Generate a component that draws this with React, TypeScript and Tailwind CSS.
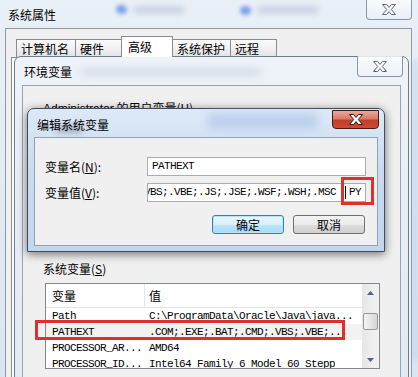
import React from "react";

function XGlyph({ active }: { active?: boolean }) {
  return (
    <svg width="14" height="11" viewBox="0 0 14 11">
      <polygon
        points="0.5,0.5 4.6,0.5 7,3.4 9.4,0.5 13.5,0.5 9.3,5.5 13.5,10.5 9.4,10.5 7,7.6 4.6,10.5 0.5,10.5 4.7,5.5"
        fill={active ? "#ffffff" : "#f7f9fb"}
        stroke={active ? "#3b1510" : "#5d6878"}
        strokeWidth="1"
        strokeLinejoin="round"
      />
    </svg>
  );
}

function Tab({
  children,
  w,
  selected,
}: {
  children: React.ReactNode;
  w: string;
  selected?: boolean;
}) {
  if (selected) {
    return (
      <div
        className={`${w} -ml-px h-[21px] border border-b-0 border-[#898c95] bg-white pl-[6px] leading-[20px] relative z-10`}
      >
        {children}
      </div>
    );
  }
  return (
    <div
      className={`${w} -ml-px h-[18px] border border-b-0 border-[#898c95] bg-[linear-gradient(180deg,#fbfbfb_0%,#f0f0f0_50%,#e3e3e3_100%)] pl-[4px] leading-[17px]`}
    >
      {children}
    </div>
  );
}

const rows = [
  { k: "Path", v: "C:\\ProgramData\\Oracle\\Java\\java...", hl: false },
  { k: "PATHEXT", v: ".COM;.EXE;.BAT;.CMD;.VBS;.VBE;...", hl: true },
  { k: "PROCESSOR_AR...", v: "AMD64", hl: false },
  { k: "PROCESSOR_ID...", v: "Intel64 Family 6 Model 60 Stepp", hl: false },
];

export default function App() {
  return (
    <div className="relative w-[418px] h-[377px] overflow-hidden bg-[linear-gradient(180deg,#eaf0f7_0%,#dbe5f1_100%)] font-['Noto_Sans_CJK_SC',sans-serif] text-[12px] text-black">
      {/* aero glass blurred background */}
      <div className="absolute left-[116px] top-[5px] w-[11px] h-[9px] rounded-full bg-[#4f7fe6] blur-[2px] opacity-70" />
      <div className="absolute left-[134px] top-[7px] w-[50px] h-[6px] bg-[#8496ba] blur-[3px] opacity-40" />
      <div className="absolute left-[240px] top-[6px] w-[11px] h-[9px] rounded-full bg-[#4f7fe6] blur-[2px] opacity-70" />
      <div className="absolute left-[258px] top-[7px] w-[60px] h-[6px] bg-[#8496ba] blur-[3px] opacity-40" />
      <div className="absolute left-[412px] top-[60px] w-[6px] h-[300px] bg-[#b9cbe3] blur-[3px] opacity-60" />

      {/* 系统属性 title */}
      <div className="absolute left-[8px] top-[6px] leading-[18px]">系统属性</div>
      <div className="absolute left-[366px] top-[-1px] w-[46px] h-[21px] rounded-b-[4px] border border-t-0 border-[#8a97a9] bg-[linear-gradient(180deg,rgba(255,255,255,0.7),rgba(235,242,250,0.4))] flex items-center justify-center">
        <XGlyph />
      </div>

      {/* 系统属性 client */}
      <div className="absolute left-[5px] top-[28px] w-[407px] h-[360px] border border-[#8d9aab] bg-[#f0f0f0]">
        <div className="flex items-end h-[28px] pl-[11px] pt-[7px]">
          <Tab w="w-[60px]">计算机名</Tab>
          <Tab w="w-[47px]">硬件</Tab>
          <Tab w="w-[52px]" selected>
            高级
          </Tab>
          <Tab w="w-[59px]">系统保护</Tab>
          <Tab w="w-[47px]">远程</Tab>
        </div>
        <div className="ml-[5px] mr-[5px] h-[330px] border border-[#898c95] bg-[#fbfbfb]" />
      </div>

      {/* 环境变量 window */}
      <div className="absolute left-[14px] top-[56px] w-[395px] h-[340px] rounded-t-[7px] border border-[#6f7c8e] bg-[linear-gradient(180deg,#eef3f9_0%,#e1e9f3_100%)]">
        <div className="absolute left-[66px] top-[12px] w-[180px] h-[6px] bg-[#9aa8bd] blur-[4px] opacity-40" />
        <div className="relative h-[28px] pl-[9px] pt-[7px] leading-[16px]">环境变量</div>
        <div className="absolute left-[342px] top-[-1px] w-[46px] h-[21px] rounded-b-[4px] border border-t-0 border-[#8a97a9] bg-[linear-gradient(180deg,rgba(255,255,255,0.8),rgba(235,242,250,0.5))] flex items-center justify-center">
          <XGlyph />
        </div>
        <div className="mx-[7px] h-[320px] border border-[#97a4b6] bg-[#f0f0f0] pl-[20px] pt-[14px]">
          <div className="leading-[16px] whitespace-nowrap">
            <span className="font-['Liberation_Sans',sans-serif]">Administrator</span> 的用户变量(<u>U</u>)
          </div>
          <div className="mt-[144px] leading-[16px]">
            系统变量(<u>S</u>)
          </div>
          {/* list view */}
          <div className="mt-[6px] ml-[2px] w-[335px] h-[86px] border border-[#828790] bg-white flex overflow-hidden">
            <div className="flex-1 flex flex-col">
              <div className="h-[24px] flex items-center border-b border-[#e5e5e5] shrink-0">
                <div className="w-[99px] h-full pl-[6px] flex items-center border-r border-[#e3e8ee]">变量</div>
                <div className="pl-[4px]">值</div>
              </div>
              {rows.map((r) => (
                <div
                  key={r.k}
                  className={`h-[16px] shrink-0 flex items-center font-['Liberation_Mono',monospace] text-[11px] tracking-[-0.6px] whitespace-nowrap ${
                    r.hl ? "bg-[#f2f2f2]" : "bg-white"
                  }`}
                >
                  <div className="w-[103px] pl-[6px] overflow-hidden">{r.k}</div>
                  <div className="overflow-hidden">{r.v}</div>
                </div>
              ))}
            </div>
            {/* scrollbar */}
            <div className="w-[17px] h-full bg-[linear-gradient(90deg,#e6e6e6,#f2f2f2)] flex flex-col items-center">
              <div className="h-[17px] w-full flex items-center justify-center">
                <svg width="7" height="4" viewBox="0 0 7 4">
                  <polygon points="0,4 3.5,0 7,4" fill="#4d6185" />
                </svg>
              </div>
              <div className="mt-[12px] w-[15px] h-[17px] rounded-[2px] border border-[#979797] bg-[linear-gradient(90deg,#f3f3f3,#e6e6e6_50%,#d6d6d6)]" />
              <div className="flex-1" />
              <div className="h-[17px] w-full flex items-center justify-center">
                <svg width="7" height="4" viewBox="0 0 7 4">
                  <polygon points="0,0 7,0 3.5,4" fill="#4d6185" />
                </svg>
              </div>
            </div>
          </div>
        </div>
      </div>

      {/* 编辑系统变量 dialog */}
      <div className="absolute left-[27px] top-[108px] w-[358px] h-[144px] rounded-t-[7px] border border-[#3e4c5e] bg-[linear-gradient(180deg,#dde9f7_0%,#cbdcf0_40%,#c2d6ee_100%)] shadow-[0_2px_10px_rgba(0,0,0,0.55)]">
        <div className="absolute left-[28px] top-[17px] w-[26px] h-[6px] bg-[#556070] blur-[3px] opacity-50" />
        <div className="absolute left-[180px] top-[4px] w-[110px] h-[16px] bg-[#a9c3e6] blur-[5px] opacity-60" />
        <div className="relative h-[28px] pl-[9px] pt-[8px] leading-[16px]">编辑系统变量</div>
        <div className="absolute left-[304px] top-[1px] w-[47px] h-[19px] rounded-b-[4px] border border-[#4a1a14] bg-[linear-gradient(180deg,#e9a99b_0%,#d97b68_45%,#c13f2b_55%,#c94a36_100%)] flex items-center justify-center">
          <XGlyph active />
        </div>
        <div className="mx-[6px] h-[109px] border border-[#8fa2ba] bg-[#f0f0f0] pl-[10px] pt-[19px]">
          <div className="flex items-center h-[19px]">
            <div className="w-[102px] leading-[16px]">
              变量名(<u>N</u>):
            </div>
            <div className="w-[219px] h-[19px] border border-[#abadb3] bg-white pl-[4px] flex items-center font-['Liberation_Mono',monospace] text-[11px] tracking-[-0.6px]">
              PATHEXT
            </div>
          </div>
          <div className="flex items-center h-[19px] mt-[7px]">
            <div className="w-[102px] leading-[16px]">
              变量值(<u>V</u>):
            </div>
            <div className="w-[219px] h-[19px] border border-[#abadb3] bg-white flex items-center overflow-hidden whitespace-nowrap font-['Liberation_Mono',monospace] text-[11px] tracking-[-0.6px]">
              <span className="ml-[-4px]">VBS;.VBE;.JS;.JSE;.WSF;.WSH;.MSC</span>
              <span className="ml-[9px] w-px h-[13px] bg-black" />
              <span className="ml-[3px]">PY</span>
            </div>
          </div>
          <div className="flex justify-end gap-[9px] pr-[12px] mt-[13px]">
            <div className="w-[72px] h-[19px] rounded-[3px] border border-[#3c7fb1] bg-[linear-gradient(180deg,#eaf6fd_0%,#d9f0fc_50%,#bee6fd_51%,#a7d9f5_100%)] shadow-[inset_0_0_0_1px_#b5e2f7] flex items-center justify-center leading-[16px]">
              确定
            </div>
            <div className="w-[72px] h-[19px] rounded-[3px] border border-[#707070] bg-[linear-gradient(180deg,#f2f2f2_0%,#ebebeb_50%,#dddddd_51%,#cfcfcf_100%)] flex items-center justify-center leading-[16px]">
              取消
            </div>
          </div>
        </div>
      </div>

      {/* red highlight boxes */}
      <div className="absolute left-[341px] top-[177px] w-[33px] h-[28px] border-[3px] border-[#e0302c]" />
      <div className="absolute left-[35px] top-[320px] w-[310px] h-[20px] border-[3px] border-[#e0302c]" />
    </div>
  );
}
